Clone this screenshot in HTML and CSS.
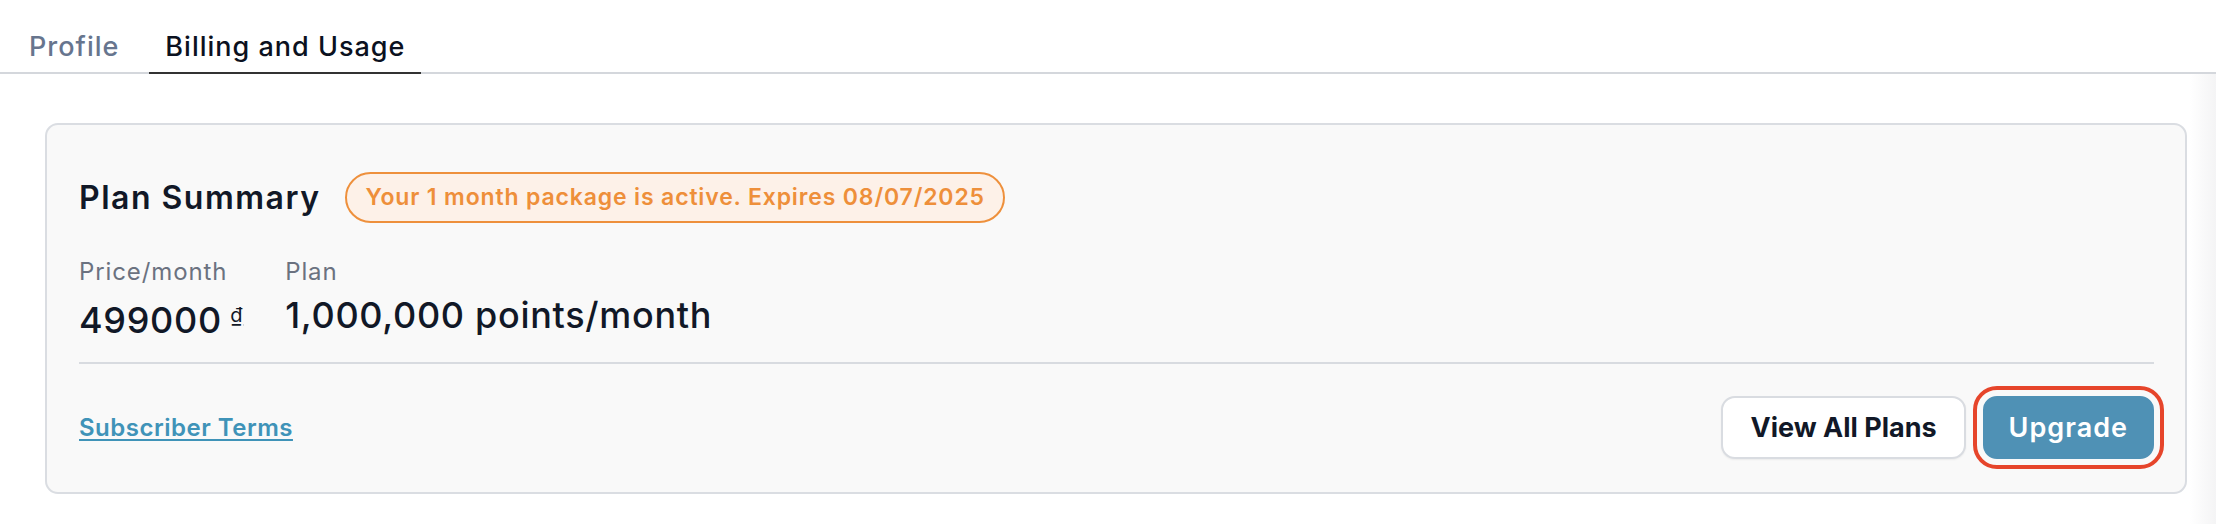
FILE: index.html
```html
<!DOCTYPE html>
<html lang="en">
<head>
<meta charset="utf-8">
<title>Billing and Usage</title>
<link rel="stylesheet" href="styles.css">
</head>
<body>
  <nav class="tabs">
    <a class="tab">Profile</a>
    <a class="tab tab-active">Billing and Usage</a>
  </nav>
  <main class="content">
    <section class="card">
      <header class="card-header">
        <h2 class="card-title">Plan Summary</h2>
        <span class="badge">Your 1 month package is active. Expires 08/07/2025</span>
      </header>
      <div class="info">
        <div class="info-col">
          <div class="info-label">Price/month</div>
          <div class="info-value">499000 <span class="currency">₫</span></div>
        </div>
        <div class="info-col">
          <div class="info-label">Plan</div>
          <div class="info-value">1,000,000 points/month</div>
        </div>
      </div>
      <hr class="divider">
      <footer class="card-footer">
        <a class="terms-link" href="#">Subscriber Terms</a>
        <div class="actions">
          <button class="btn btn-outline">View All Plans</button>
          <button class="btn btn-primary">Upgrade</button>
        </div>
      </footer>
    </section>
  </main>
</body>
</html>
```

FILE: styles.css
```css
* { box-sizing: border-box; }

html, body {
  margin: 0;
  background: #ffffff;
  font-family: Inter, "Liberation Sans", sans-serif;
  color: #111827;
}

.tabs {
  display: flex;
  gap: 14px;
  padding-left: 13px;
  border-bottom: 2px solid #d4d7dc;
}

.tab {
  display: block;
  padding: 29px 16px 7px;
  font-size: 27px;
  line-height: 36px;
  font-weight: 500;
  letter-spacing: 1px;
  color: #67758e;
  border-bottom: 2px solid transparent;
  margin-bottom: -2px;
  cursor: pointer;
}

.tab-active {
  color: #0b1120;
  border-bottom-color: #333333;
}

.content {
  padding: 49px 29px 40px 45px;
  background: linear-gradient(to right, #ffffff calc(100% - 26px), #f4f4f5 100%);
}

.card {
  background: #f9f9f9;
  border: 2px solid #dadde2;
  border-radius: 13px;
  padding: 47px 31px 33px 32px;
}

.card-header {
  display: flex;
  align-items: center;
  gap: 25px;
}

.card-title {
  margin: 0;
  font-size: 32px;
  line-height: 40px;
  font-weight: 600;
  letter-spacing: 1.5px;
  color: #111827;
}

.badge {
  display: inline-block;
  padding: 9px 18px;
  border: 2px solid #ee903c;
  border-radius: 999px;
  background: #fdf1e8;
  color: #ee8f3a;
  font-size: 23px;
  line-height: 29px;
  font-weight: 600;
  letter-spacing: 0.85px;
}

.info {
  display: flex;
  gap: 42px;
  margin-top: 33px;
}

.info-col {
  display: flex;
  flex-direction: column;
  gap: 5px;
}

.info-label {
  font-size: 24px;
  line-height: 32px;
  letter-spacing: 0.9px;
  color: #6b7280;
}

.info-value {
  font-size: 36px;
  line-height: 44px;
  font-weight: 500;
  letter-spacing: 0.7px;
  color: #111827;
}

.currency {
  font-size: 20px;
  font-weight: 400;
  vertical-align: 11px;
  margin-left: -2px;
  text-decoration: underline;
  text-decoration-thickness: 2px;
  text-underline-offset: 2px;
}

.divider {
  margin: 20px 0 0;
  border: 0;
  height: 2px;
  background: #d8dbe0;
}

.card-footer {
  display: flex;
  align-items: center;
  justify-content: space-between;
  margin-top: 32px;
}

.terms-link {
  font-size: 24px;
  line-height: 32px;
  font-weight: 600;
  letter-spacing: 0.5px;
  color: #3f93b8;
  text-decoration: underline;
  text-decoration-thickness: 2px;
  text-underline-offset: 3px;
}

.actions {
  display: flex;
  align-items: center;
  gap: 17px;
}

.btn {
  font-family: inherit;
  font-size: 27px;
  line-height: 35px;
  font-weight: 700;
  padding: 12px 24px;
  border-radius: 14px;
  border: 2px solid transparent;
  cursor: pointer;
}

.btn-outline {
  background: #ffffff;
  border-color: #d9dce1;
  color: #111827;
  padding: 12px 27px;
  box-shadow: 0 1px 2px rgba(0, 0, 0, 0.06);
}

.btn-primary {
  background: #4f91b5;
  border-color: #4f91b5;
  color: #ffffff;
  font-weight: 600;
  letter-spacing: 1px;
  outline: 4px solid #e6452b;
  outline-offset: 6px;
}
```
